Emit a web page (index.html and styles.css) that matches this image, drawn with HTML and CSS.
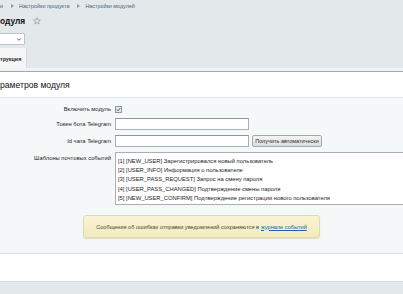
FILE: index.html
```html
<!DOCTYPE html>
<html lang="ru">
<head>
  <meta charset="UTF-8" />
  <meta name="viewport" content="width=device-width, initial-scale=1.0"/>
  <title>Настройки модуля</title>
  <link rel="stylesheet" href="styles.css">
</head>
<body>
  <div class="top">
    <div class="crumbs">
      <span>и</span>
      <svg class="sep" width="3" height="4" viewBox="0 0 3 4"><path d="M0 0L3 2L0 4Z" fill="#8d9aa2"/></svg>
      <a href="#">Настройки продукта</a>
      <svg class="sep" width="3" height="4" viewBox="0 0 3 4"><path d="M0 0L3 2L0 4Z" fill="#8d9aa2"/></svg>
      <a href="#">Настройки модулей</a>
    </div>
    <h1 class="title">одуля
      <svg class="star" width="8" height="8" viewBox="0 0 10 10"><path d="M5 0.8L6.2 3.6L9.2 3.8L6.9 5.8L7.6 8.8L5 7.2L2.4 8.8L3.1 5.8L0.8 3.8L3.8 3.6Z" fill="none" stroke="#8b979c" stroke-width="0.9" stroke-linejoin="round"/></svg>
    </h1>
    <div class="site-select">
      <svg width="4" height="3" viewBox="0 0 4 3"><path d="M0.3 0.5L2 2.3L3.7 0.5" fill="none" stroke="#555" stroke-width="0.9"/></svg>
    </div>
    <div class="tabs"><div class="tab">трукция</div></div>
  </div>

  <div class="panel">
    <div class="panel-head">раметров модуля</div>
    <div class="panel-body">
      <div class="form">
        <div class="label">Включить модуль</div>
        <div class="field">
          <svg class="check" width="7" height="7" viewBox="0 0 7 7"><rect x="0.5" y="0.5" width="6" height="6" fill="#e6ebee" stroke="#8c979d"/><path d="M1.7 3.6L3 4.8L5.3 2" fill="none" stroke="#3f4d56" stroke-width="0.9"/></svg>
        </div>

        <div class="label">Токен бота Telegram</div>
        <div class="field"><input class="text" type="text" /></div>

        <div class="label">Id чата Telegram</div>
        <div class="field"><input class="text" type="text" /><button class="btn" type="button">Получить автоматически</button></div>

        <div class="label label-top">Шаблоны почтовых событий</div>
        <div class="field">
          <div class="multi">
            <div class="opt">[1] [NEW_USER] Зарегистрировался новый пользователь</div>
            <div class="opt">[2] [USER_INFO] Информация о пользователе</div>
            <div class="opt">[3] [USER_PASS_REQUEST] Запрос на смену пароля</div>
            <div class="opt">[4] [USER_PASS_CHANGED] Подтверждение смены пароля</div>
            <div class="opt">[5] [NEW_USER_CONFIRM] Подтверждение регистрации нового пользователя</div>
          </div>
        </div>
      </div>

      <div class="note">Сообщения об ошибках отправки уведомлений сохраняются в <a href="#">журнале событий</a></div>
    </div>
    <div class="panel-foot"></div>
  </div>
</body>
</html>
```

FILE: styles.css
```css
body { margin: 0; overflow: hidden; background: #e3e9eb; font-family: "Liberation Sans", Arial, sans-serif; color: #222; }

.top { height: 72px; }
.crumbs { height: 12px; display: flex; align-items: center; font-size: 5.4px; color: #4e6477; }
.crumbs a { color: #4e6477; text-decoration: none; }
.crumbs .sep { margin: 0 5px 0 8px; }

.title { margin: 0; height: 18px; line-height: 18px; font-size: 8.4px; font-weight: bold; color: #111; display: flex; align-items: center; }
.title .star { margin-left: 8px; }

.site-select { margin: 3px 0 0 -10px; width: 30px; height: 10px; border: 1px solid #bcc4c8; border-radius: 1px; background: #fff; display: flex; align-items: center; justify-content: flex-end; padding-right: 3px; }

.tabs { margin-top: 3px; height: 20px; padding-bottom: 3px; border-bottom: 1px solid #9ea9ad; background: linear-gradient(#e3e9eb 20px, #eef2f3 20px); }
.tab { width: 26px; height: 20px; line-height: 22px; background: #f4f6f7; border-right: 1px solid #d3dadd; font-size: 5.4px; font-weight: bold; color: #2a2a2a; }

.panel { background: #fff; }
.panel-head { height: 25px; line-height: 26px; font-size: 8.6px; color: #111; border-bottom: 1px solid #e1e7e9; }
.panel-body { background: #f5f8f9; padding: 7px 0 15px; border-bottom: 1px solid #dbe2e5; }
.panel-foot { height: 27px; border-bottom: 1px solid #d3dbde; }

.form { display: grid; grid-template-columns: 111px 1fr; column-gap: 4px; row-gap: 5px; }
.label { font-size: 5.8px; display: flex; align-items: center; justify-content: flex-end; color: #222; }
.label-top { align-items: flex-start; padding-top: 3px; }
.field { display: flex; align-items: center; min-height: 8px; }
.check { display: block; }

.text { box-sizing: border-box; width: 134px; height: 12px; margin: 0; padding: 0 2px; border: 1px solid #a7b0b5; border-top-color: #8e989e; background: #fff; border-radius: 0; }
.btn { box-sizing: border-box; margin: 0 0 0 3px; width: 70px; height: 12px; padding: 0 2px; border: 1px solid #a3a9ad; border-radius: 2px; background: linear-gradient(#f4f4f4, #dedede); font-family: "Liberation Sans", Arial, sans-serif; font-size: 5.5px; color: #2a2a2a; white-space: nowrap; overflow: hidden; }

.multi { box-sizing: border-box; width: 300px; height: 53px; padding: 4px 0 0 2px; border: 1px solid #a7b0b5; background: #fff; }
.opt { height: 9.2px; line-height: 9.2px; font-size: 5.8px; color: #1e1e1e; white-space: nowrap; }

.note { margin: 10px auto 0; width: 237px; height: 23px; box-sizing: border-box; display: flex; align-items: center; justify-content: center; font-size: 5.6px; color: #4a4634; background: linear-gradient(#faf4d4, #f3eabd); border: 1px solid #e3d9a6; border-radius: 3px; box-shadow: 0 1px 1px rgba(150, 140, 90, 0.25); }
.note a { color: #2063b4; margin-left: 2px; }
```
